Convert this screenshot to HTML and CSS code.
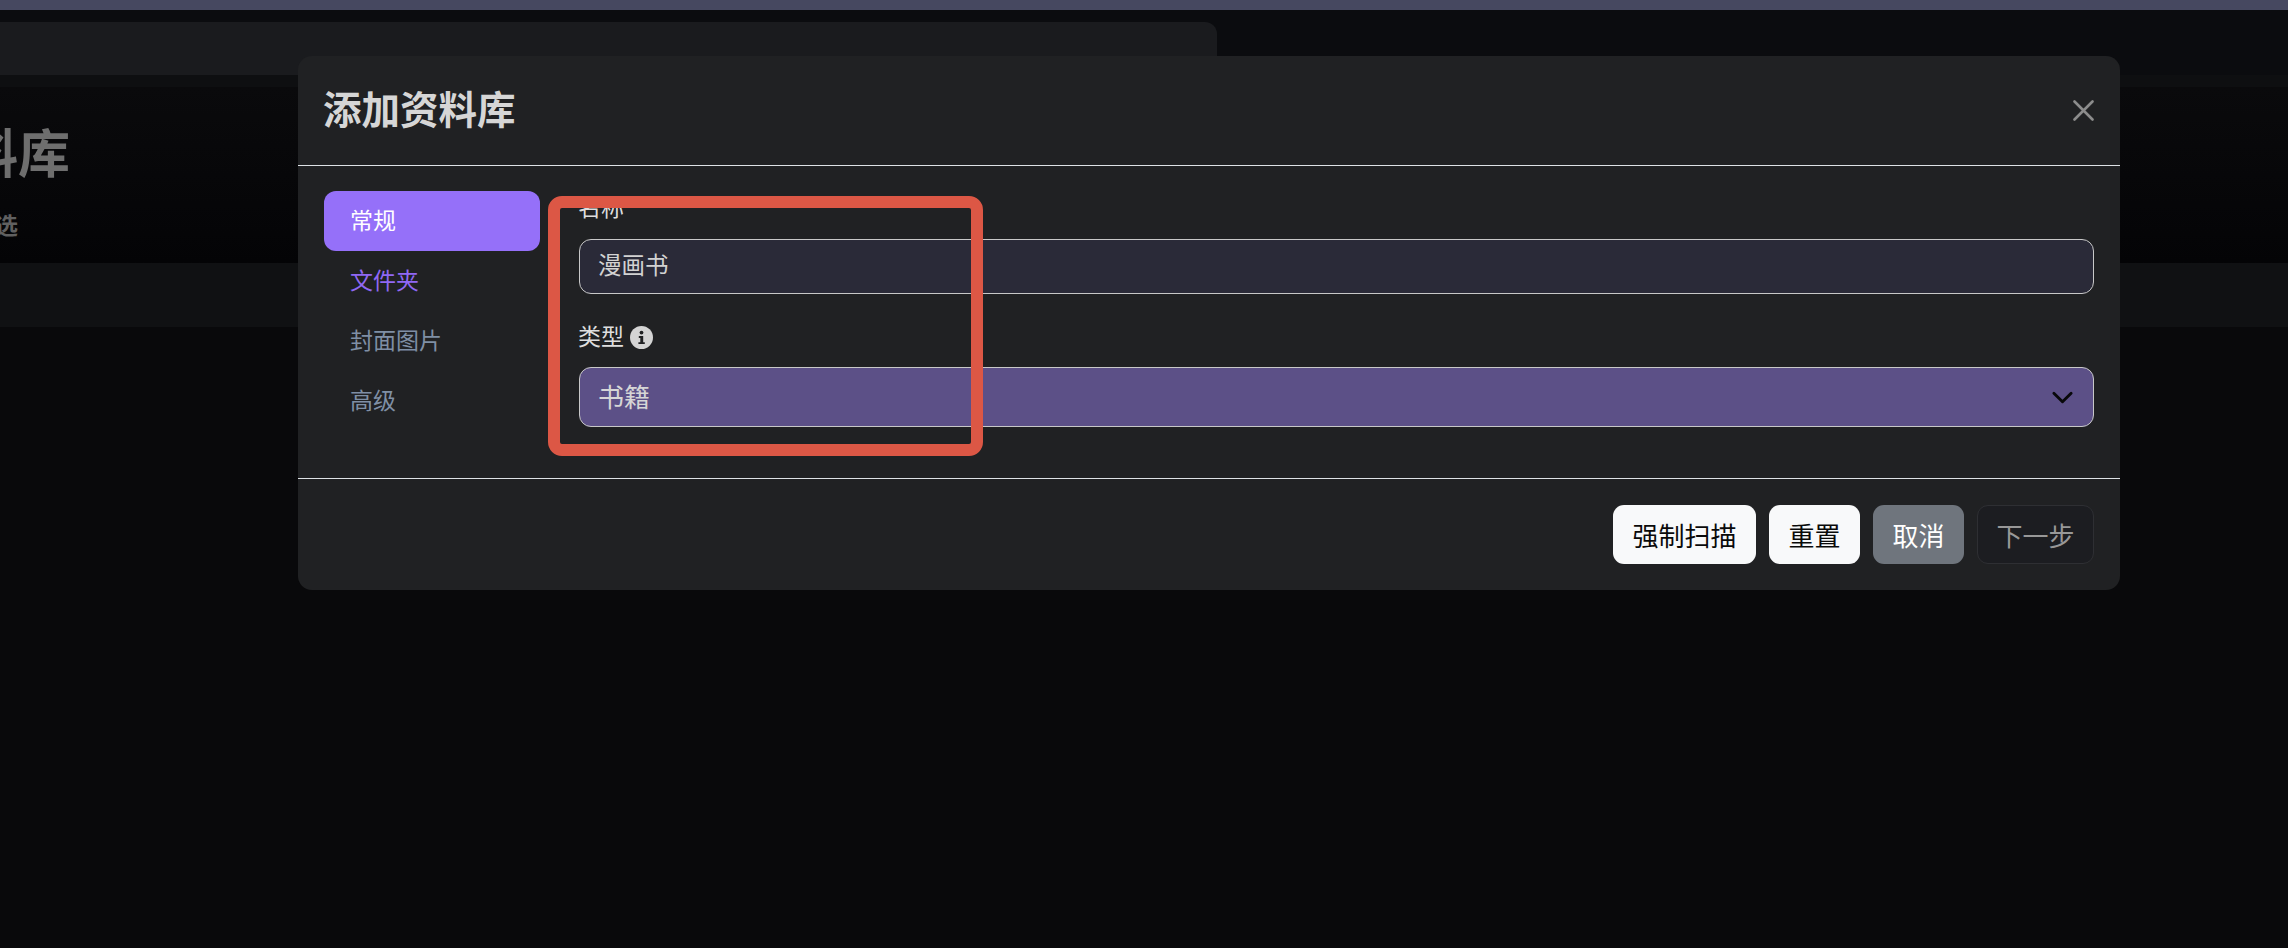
FILE: index.html
```html
<!DOCTYPE html>
<html lang="zh-CN">
<head>
    <meta charset="UTF-8">
    <title>添加资料库</title>
    <link rel="stylesheet" href="styles.css">
</head>
<body>
    <div class="top-strip"></div>
    <div class="nav-band">
        <div class="search-bar"></div>
    </div>
    <header class="hero">
        <h1>资料库</h1>
        <p>筛选</p>
    </header>
    <div class="tool-band"></div>

    <section class="modal">
        <div class="modal-header">
            <h2>添加资料库</h2>
            <button type="button" class="btn-close" aria-label="关闭">
                <svg viewBox="0 0 21 21" width="21" height="21">
                    <path d="M1.5 1.5l18 18M19.5 1.5l-18 18" fill="none" stroke="currentColor" stroke-width="2.6" stroke-linecap="round"/>
                </svg>
            </button>
        </div>

        <div class="modal-body">
            <nav class="side-nav">
                <a class="nav-item active">常规</a>
                <a class="nav-item next">文件夹</a>
                <a class="nav-item">封面图片</a>
                <a class="nav-item">高级</a>
            </nav>
            <form class="form-pane">
                <label class="field-label" for="name">名称</label>
                <input type="text" id="name" class="input-field" value="漫画书">

                <label class="field-label second" for="type">
                    类型
                    <svg class="info-icon" viewBox="0 0 23 23" width="23" height="23">
                        <circle cx="11.5" cy="11.5" r="11.5" fill="#d4d4d4"/>
                        <circle cx="11.5" cy="6.6" r="1.9" fill="#202123"/>
                        <path d="M8.8 10h4.4v6.2h1.6v1.9H8.4v-1.9h1.9v-4.3H8.8z" fill="#202123"/>
                    </svg>
                </label>
                <div class="select-wrap">
                    <select id="type" class="select-field">
                        <option>书籍</option>
                    </select>
                    <svg class="chevron" viewBox="0 0 16 16" width="23" height="23">
                        <path d="M2 5l6 6 6-6" fill="none" stroke="currentColor" stroke-width="2" stroke-linecap="round" stroke-linejoin="round"/>
                    </svg>
                </div>
            </form>
        </div>

        <div class="modal-footer">
            <button type="button" class="btn btn-light">强制扫描</button>
            <button type="button" class="btn btn-light">重置</button>
            <button type="button" class="btn btn-gray">取消</button>
            <button type="button" class="btn btn-off" disabled>下一步</button>
        </div>
    </section>

    <div class="callout"></div>
</body>
</html>
```

FILE: styles.css
```css
body {
    font-family: "Noto Sans CJK SC", "Noto Sans", sans-serif;
    margin: 0;
    height: 948px;
    overflow: hidden;
    background-color: #09090b;
}

.top-strip {
    height: 10px;
    background-color: #464860;
}

.nav-band {
    height: 65px;
    padding-top: 12px;
    box-sizing: border-box;
    background-color: #0b0c0f;
}

.search-bar {
    width: 1217px;
    height: 53px;
    border-radius: 0 12px 0 0;
    background-color: #1a1b1e;
}

.hero {
    height: 188px;
    box-sizing: border-box;
    padding-top: 12px;
    border-top: 12px solid #0e0f11;
    background: linear-gradient(#0a0a0c, #040406);
    color: #6e6e6e;
    font-weight: 700;
    overflow: hidden;
}

.hero h1 {
    margin: 0 0 0 -86px;
    padding-top: 16px;
    font-size: 52px;
    line-height: 72px;
}

.hero p {
    margin: 20px 0 0 -28px;
    font-size: 23px;
    line-height: 34px;
    color: #606060;
}

.tool-band {
    height: 64px;
    background-color: #101113;
}

.modal {
    position: absolute;
    top: 56px;
    left: 298px;
    width: 1822px;
    height: 534px;
    border-radius: 14px;
    background-color: #202123;
    color: #dcdcdc;
}

.modal-header {
    display: flex;
    justify-content: space-between;
    align-items: center;
    height: 109px;
    padding: 0 26px;
    border-bottom: 1px solid #dee2e6;
}

.modal-header h2 {
    margin: 0 0 7px -1px;
    font-size: 38.5px;
    line-height: 54px;
    font-weight: 700;
    color: #d6d6d6;
}

.btn-close {
    display: flex;
    padding: 0;
    border: none;
    background: none;
    color: #8c8c8c;
}

.modal-body {
    display: flex;
    gap: 39px;
    height: 313px;
    padding: 25px 26px 0;
    box-sizing: border-box;
    border-bottom: 1px solid #dee2e6;
}

.side-nav {
    display: flex;
    flex-direction: column;
    flex: 0 0 216px;
}

.nav-item {
    height: 60px;
    box-sizing: border-box;
    padding: 0 0 3px 26px;
    border-radius: 12px;
    font-size: 23px;
    line-height: 57px;
    color: #7f8fa5;
}

.nav-item.active {
    background-color: #9570f9;
    color: #fff;
}

.nav-item.next {
    color: #9068f5;
}

.form-pane {
    display: flex;
    flex-direction: column;
    flex: 1;
}

.field-label {
    display: flex;
    align-items: center;
    gap: 6px;
    height: 34px;
    box-sizing: border-box;
    margin-bottom: 14px;
    padding-bottom: 3px;
    text-indent: -1px;
    font-size: 23px;
    line-height: 31px;
    color: #dedede;
}

.field-label.second {
    margin-top: 26px;
    margin-bottom: 13px;
}

.info-icon {
    margin-top: 3px;
}

.input-field,
.select-field {
    width: 100%;
    box-sizing: border-box;
    border: 1px solid #c8c8c8;
    border-radius: 12px;
    outline: none;
    font-family: inherit;
}

.input-field {
    height: 55px;
    padding: 0 18px 5px;
    background-color: #2a2a38;
    color: #d2d2d2;
    font-size: 23.5px;
}

.select-wrap {
    position: relative;
}

.select-field {
    display: block;
    height: 60px;
    padding: 0 18px 3px;
    appearance: none;
    background-color: #5c5087;
    color: #d6d6d6;
    font-size: 26px;
}

.chevron {
    position: absolute;
    top: 19px;
    right: 20px;
    color: #08080a;
}

.modal-footer {
    display: flex;
    justify-content: flex-end;
    gap: 13px;
    padding: 26px 26px 0;
}

.btn {
    height: 59px;
    padding: 0 18.5px;
    border: 1px solid transparent;
    border-radius: 11px;
    font-family: inherit;
    font-size: 26px;
}

.btn-light {
    background-color: #f8f9fa;
    color: #0a0a0a;
}

.btn-gray {
    background-color: #6f757d;
    color: #fff;
}

.btn-off {
    background-color: #1c1d21;
    border-color: #2e2f33;
    color: #989898;
}

.callout {
    position: absolute;
    top: 196px;
    left: 548px;
    width: 435px;
    height: 260px;
    box-sizing: border-box;
    border: 12px solid #dc5745;
    border-radius: 14px;
}
```
